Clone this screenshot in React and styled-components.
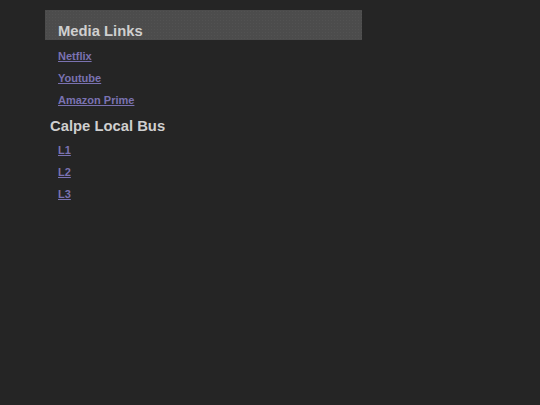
import React from 'react'
import styled, { createGlobalStyle } from 'styled-components'

const GlobalStyle = createGlobalStyle`
  html, body {
    margin: 0;
    padding: 0;
    background: #252525;
    font-family: "Liberation Sans", Arial, sans-serif;
  }
`

const Page = styled.div`
  padding: 10px 0 0 45px;
`

const Section = styled.section`
  width: 317px;
`

const Header = styled.div`
  box-sizing: border-box;
  height: 30px;
  padding: 12px 0 0 13px;
  background: #4c4c4c;
  background-image: radial-gradient(rgba(255, 255, 255, 0.03) 1px, transparent 1px);
  background-size: 3px 3px;
`

const Title = styled.h2`
  margin: 0;
  padding-left: ${p => p.$indent || 0}px;
  font-size: 14.8px;
  line-height: 18px;
  font-weight: bold;
  color: #cfcfcf;
`

const LinkList = styled.ul`
  list-style: none;
  margin: ${p => p.$top ?? 5}px 0 0;
  padding: 0 0 0 13px;
`

const Item = styled.li`
  line-height: 22px;
  font-size: 11px;
  font-weight: bold;
`

const A = styled.a`
  color: #7a72b1;
  text-decoration: underline;
`

const Sub = styled.div`
  margin-top: 6px;
`

const media = ['Netflix', 'Youtube', 'Amazon Prime']
const buses = ['L1', 'L2', 'L3']

export default function App() {
  return (
    <>
      <GlobalStyle />
      <Page>
        <Section>
          <Header>
            <Title>Media Links</Title>
          </Header>
          <LinkList>
            {media.map(m => (
              <Item key={m}><A href="#">{m}</A></Item>
            ))}
          </LinkList>
          <Sub>
            <Title $indent={5}>Calpe Local Bus</Title>
            <LinkList $top={4}>
              {buses.map(b => (
                <Item key={b}><A href="#">{b}</A></Item>
              ))}
            </LinkList>
          </Sub>
        </Section>
      </Page>
    </>
  )
}
